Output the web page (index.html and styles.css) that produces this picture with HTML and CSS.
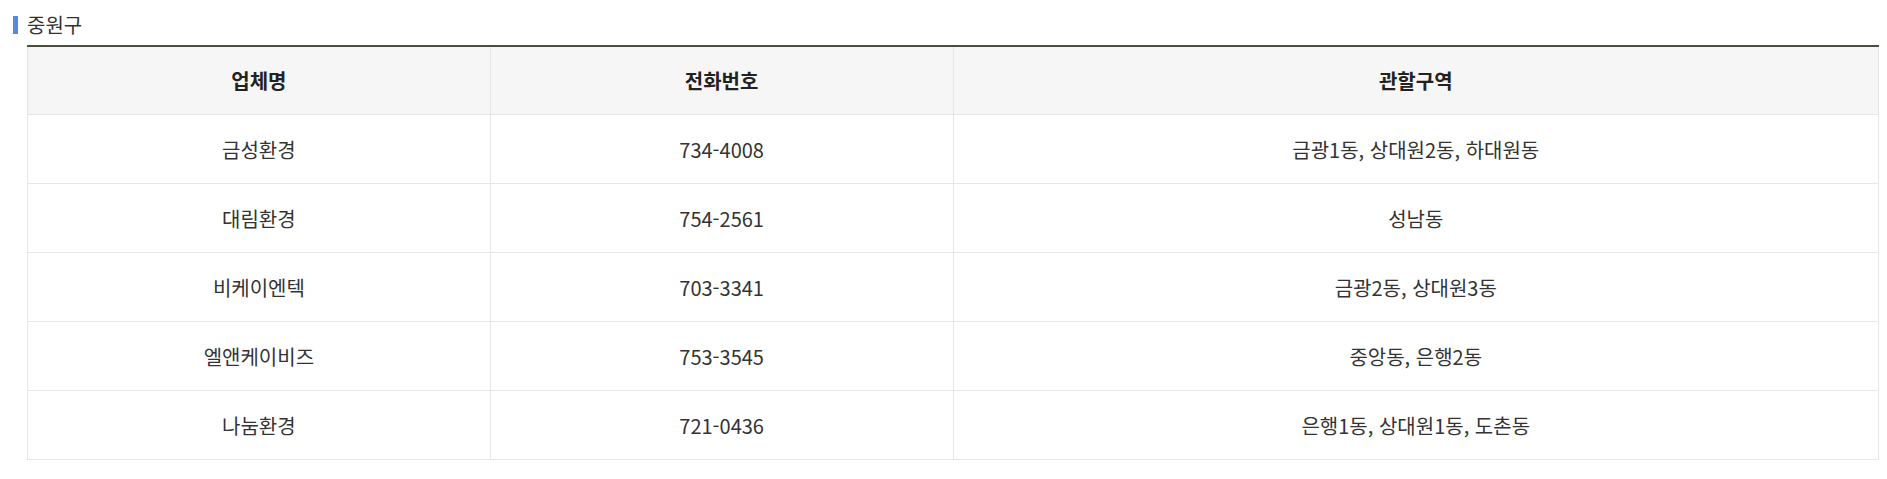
FILE: index.html
```html
<!DOCTYPE html>
<html lang="ko">
<head>
<meta charset="utf-8">
<link rel="stylesheet" href="styles.css">
</head>
<body>
<div class="section">
  <h3 class="title"><span class="bar"></span>중원구</h3>
  <table class="list">
    <colgroup><col class="c1"><col class="c2"><col class="c3"></colgroup>
    <thead>
      <tr><th>업체명</th><th>전화번호</th><th>관할구역</th></tr>
    </thead>
    <tbody>
      <tr><td>금성환경</td><td>734-4008</td><td>금광1동, 상대원2동, 하대원동</td></tr>
      <tr><td>대림환경</td><td>754-2561</td><td>성남동</td></tr>
      <tr><td>비케이엔텍</td><td>703-3341</td><td>금광2동, 상대원3동</td></tr>
      <tr><td>엘앤케이비즈</td><td>753-3545</td><td>중앙동, 은행2동</td></tr>
      <tr><td>나눔환경</td><td>721-0436</td><td>은행1동, 상대원1동, 도촌동</td></tr>
    </tbody>
  </table>
</div>
</body>
</html>
```
FILE: styles.css
```css
html, body {
  margin: 0;
  padding: 0;
  background: #fff;
}
body {
  font-family: "Noto Sans CJK KR", "Noto Sans", sans-serif;
  color: #333;
}
.section {
  padding: 10px 8px 0 13px;
}
.title {
  display: flex;
  align-items: center;
  gap: 9px;
  margin: 0 0 5px 0;
  height: 30px;
  font-size: 20px;
  font-weight: 400;
  color: #333;
  line-height: 30px;
}
.bar {
  display: block;
  width: 5px;
  height: 18px;
  background: #5a88d8;
}
.list {
  margin-left: 14px;
  width: calc(100% - 14px);
  border-collapse: collapse;
  border-top: 2px solid #4a4c3e;
  table-layout: fixed;
}
.c1, .c2 { width: 25%; }
.c3 { width: 50%; }
.list th {
  height: 67px;
  padding: 0;
  background: #f6f6f6;
  border: 1px solid #e6e6e6;
  border-top: none;
  font-size: 20px;
  font-weight: 700;
  color: #222;
  text-align: center;
  vertical-align: middle;
}
.list td {
  height: 68px;
  padding: 0;
  border: 1px solid #e6e6e6;
  font-size: 20px;
  font-weight: 400;
  color: #333;
  text-align: center;
  vertical-align: middle;
}
```
